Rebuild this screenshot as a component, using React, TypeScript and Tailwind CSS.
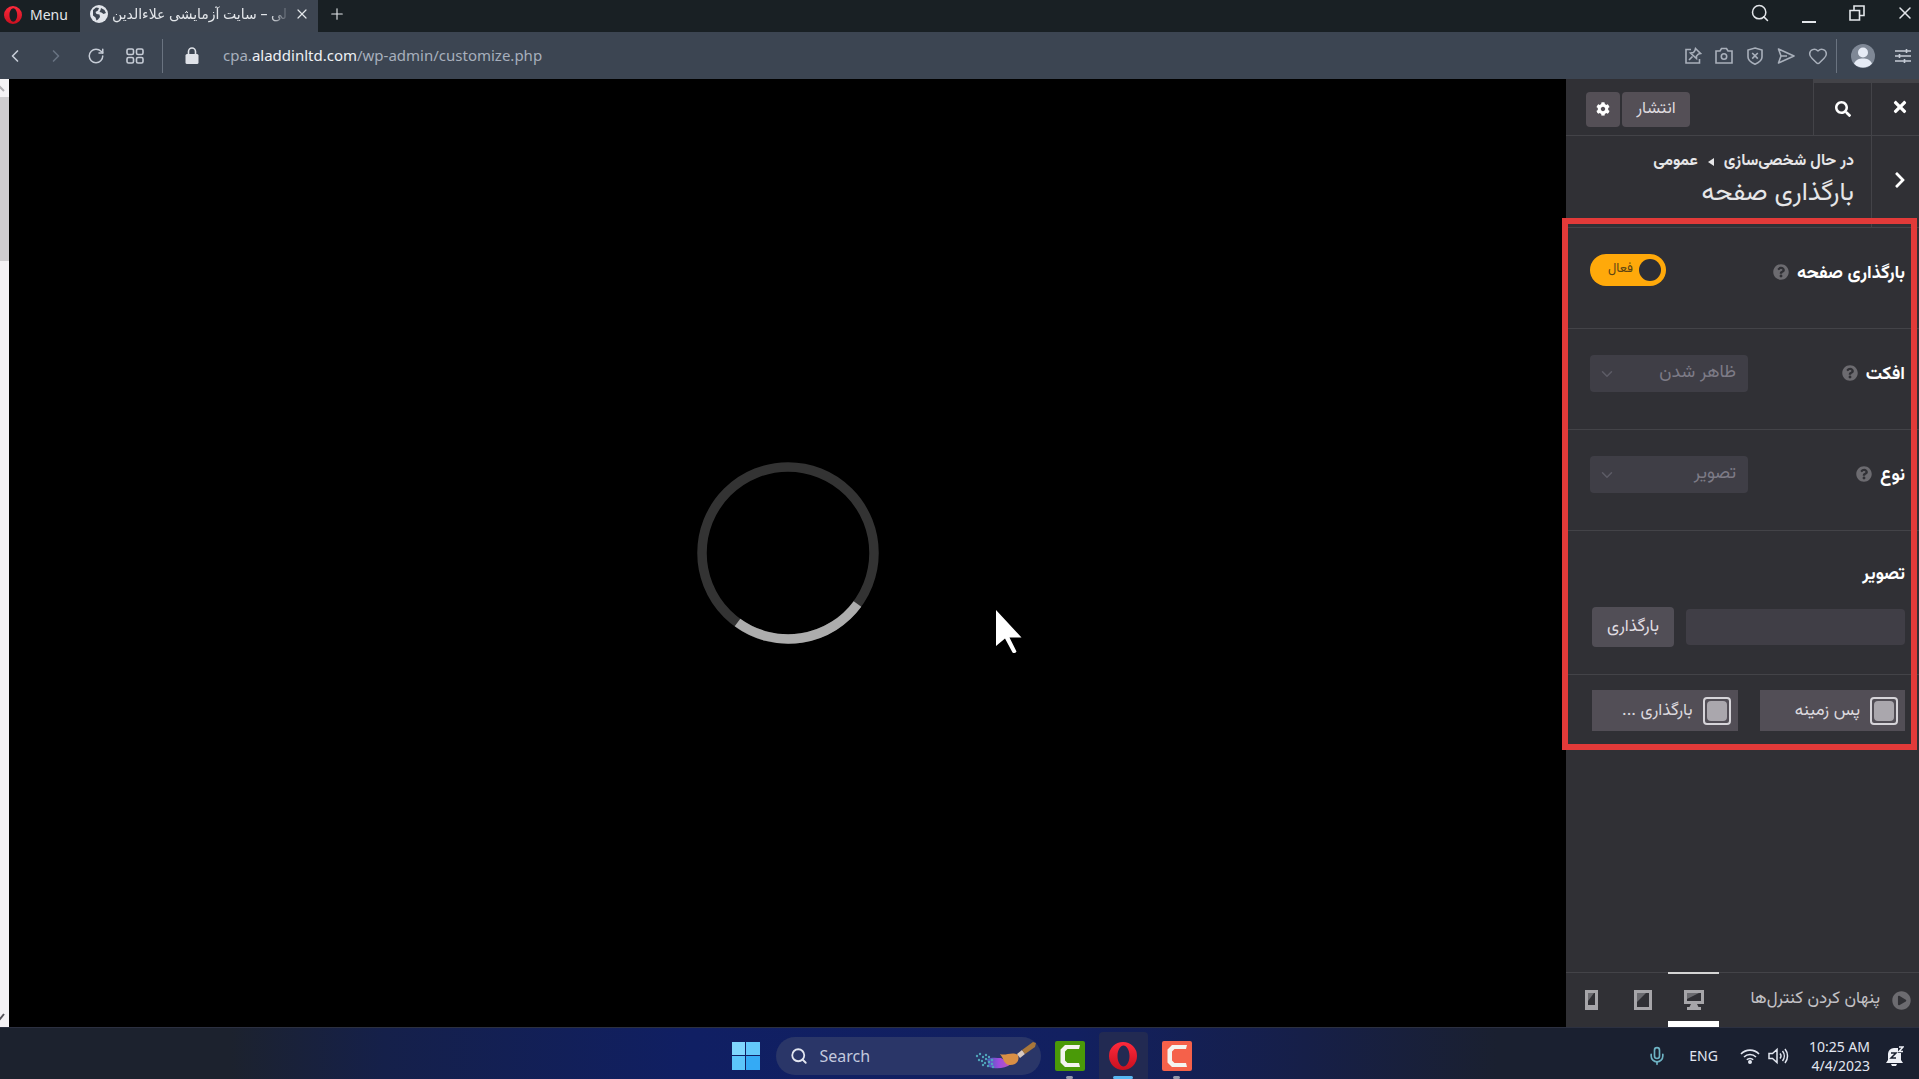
import { useState } from "react";
import type { ReactNode } from "react";
import {
  ChevronDown,
  ChevronLeft,
  ChevronRight,
  Heart,
  Mic,
  Plus,
  RotateCw,
  Search,
  X,
} from "lucide-react";
import { FaChevronRight, FaCog, FaPlayCircle, FaQuestionCircle, FaSearch, FaTimes } from "react-icons/fa";

export default function App() {
  return (
    <div className="flex h-screen flex-col overflow-hidden bg-black font-['Noto_Sans','DejaVu_Sans',sans-serif]">
      <TabBar />
      <AddressBar />
      <div className="flex min-h-0 flex-1">
        <PageScrollbar />
        <Preview />
        <Customizer />
      </div>
      <Taskbar />
    </div>
  );
}

function OperaLogo({ className }: { className: string }) {
  return (
    <svg viewBox="0 0 28 28" className={className}>
      <defs>
        <linearGradient id="opera" x1="0" y1="0" x2="0" y2="1">
          <stop offset="0" stopColor="#ff2a3c" />
          <stop offset="1" stopColor="#c8101f" />
        </linearGradient>
      </defs>
      <path
        fill="url(#opera)"
        fillRule="evenodd"
        d="M14 0a14 14 0 1 0 0 28a14 14 0 1 0 0-28zM14.500 3.500c3 0 6 4.500 6 10.500s-3 10.500-6 10.500s-6-4.500-6-10.500s3-10.500 6-10.500z"
      />
    </svg>
  );
}

function TabBar() {
  return (
    <header className="flex h-8 shrink-0 items-stretch bg-[#192024] text-[#e3e6ea]">
      <button className="flex w-20 items-center gap-2 pb-0.5 pl-1 text-sm">
        <OperaLogo className="h-5 w-[18px]" />
        Menu
      </button>
      <div className="flex w-[238px] items-center gap-1 bg-[#3d4551] pr-2 pb-1 pl-2.5">
        <svg viewBox="0 0 18 18" className="h-[18px] w-[18px] shrink-0">
          <circle cx="9" cy="9" r="9" fill="#e1e4ea" />
          <path
            fill="#3d4551"
            d="M3 5l3-2.500 3 .5-1 2.500-2.500 1.500 1 2 3 .5.500 2.500-2 2.500-1.500 1-1-3L3 10.500zM11 3l3.500 2 1.500 3-2.500 1-2-1.500-2-.5 1-2z"
          />
        </svg>
        <span className="min-w-0 flex-1 overflow-hidden text-left text-sm whitespace-nowrap [mask-image:linear-gradient(to_left,transparent,black_20px)]">
          <bdi dir="rtl">لی – سایت آزمایشی علاءالدین</bdi>
        </span>
        <button aria-label="Close tab">
          <X className="h-4 w-4" strokeWidth={1.800} />
        </button>
      </div>
      <button aria-label="New tab" className="px-2.5 pb-1">
        <Plus className="h-[18px] w-[18px]" strokeWidth={1.500} />
      </button>
      <div className="ml-auto flex items-center gap-[29px] pr-1 pb-1.5">
        <button aria-label="Search tabs">
          <Search className="h-5 w-5" strokeWidth={1.800} />
        </button>
        <button aria-label="Minimize" className="flex h-5 w-5 items-end justify-center">
          <span className="h-0.5 w-[14px] bg-[#e3e6ea]" />
        </button>
        <button aria-label="Restore">
          <svg viewBox="0 0 18 18" className="h-[18px] w-[18px]" fill="none" stroke="currentColor" strokeWidth="1.600">
            <path d="M2 6.500h9.500V16H2zM6 6.500V2h10v9.500h-4.500" />
          </svg>
        </button>
        <button aria-label="Close">
          <X className="h-5 w-5" strokeWidth={1.800} />
        </button>
      </div>
    </header>
  );
}

function AddressBar() {
  return (
    <nav className="flex h-[47px] shrink-0 items-center bg-[#3c4552] text-[#c6ccd6]">
      <div className="flex items-center gap-[21px] pl-[5px]">
        <button aria-label="Back">
          <ChevronLeft className="h-5 w-5" strokeWidth={2} />
        </button>
        <button aria-label="Forward" className="text-[#687281]">
          <ChevronRight className="h-5 w-5" strokeWidth={2} />
        </button>
        <button aria-label="Reload">
          <RotateCw className="h-[18px] w-[18px]" strokeWidth={2} />
        </button>
        <button aria-label="Speed dial">
          <svg viewBox="0 0 18 16" className="h-4 w-[18px]" fill="none" stroke="currentColor" strokeWidth="1.600">
            <rect x="1" y="1" width="6.500" height="5.500" rx="1.500" />
            <rect x="10.500" y="1" width="6.500" height="5.500" rx="1.500" />
            <rect x="1" y="9.500" width="6.500" height="5.500" rx="1.500" />
            <rect x="10.500" y="9.500" width="6.500" height="5.500" rx="1.500" />
          </svg>
        </button>
      </div>
      <span className="ml-[18px] h-[34px] w-px bg-[#6a7380]" />
      <svg viewBox="0 0 14 18" className="ml-[22px] h-[18px] w-[14px] shrink-0">
        <path d="M3.500 8V4.500a3.500 3.500 0 0 1 7 0V8" fill="none" stroke="#dfe2e8" strokeWidth="1.600" />
        <rect x="0.500" y="7" width="13" height="10" rx="1.500" fill="#dfe2e8" />
      </svg>
      <button aria-label="Address" className="ml-6 flex-1 text-left text-[15px] text-[#a7afbc]">
        cpa.<span className="text-[#eef0f4]">aladdinltd.com</span>/wp-admin/customize.php
      </button>
      <div className="flex items-center gap-[13px] text-[#a9b0bb]">
        <button aria-label="Pin">
          <svg viewBox="0 0 18 18" className="h-[18px] w-[18px]" fill="none" stroke="currentColor" strokeWidth="1.600">
            <path d="M7 2.500H2v13.500h13.500V12M5 13l3.500-3.500M11.500 1.500l5 5-2 .5-2 2v2.500L6.500 6l3-.5 1.500-2z" />
          </svg>
        </button>
        <button aria-label="Snapshot">
          <svg viewBox="0 0 18 18" className="h-[18px] w-[18px]" fill="none" stroke="currentColor" strokeWidth="1.600">
            <path d="M1 4h4l1.500-2.500h5L13 4h4v12H1z" />
            <circle cx="9" cy="9.500" r="2.700" />
          </svg>
        </button>
        <button aria-label="Ad blocker">
          <svg viewBox="0 0 18 18" className="h-[18px] w-[18px]" fill="none" stroke="currentColor" strokeWidth="1.600">
            <path d="M9 1l7 2v7c0 3.500-3 5.500-7 7.200C5 15.500 2 13.500 2 10V3zM6.200 6l5.600 5.600M11.800 6l-5.600 5.600" />
          </svg>
        </button>
        <button aria-label="Flow">
          <svg viewBox="0 0 18 18" className="h-[18px] w-[18px]" fill="none" stroke="currentColor" strokeWidth="1.600">
            <path d="M1.500 2l15.500 7-15.500 7 2.500-7zM4 9h6" strokeLinejoin="round" />
          </svg>
        </button>
        <button aria-label="Bookmark">
          <Heart className="h-5 w-5" strokeWidth={1.800} />
        </button>
      </div>
      <span className="ml-2 h-[34px] w-px bg-[#6a7380]" />
      <button aria-label="Profile" className="ml-3.5">
        <svg viewBox="0 0 24 24" className="h-6 w-6">
          <circle cx="12" cy="12" r="12" fill="#7f8896" />
          <circle cx="12" cy="8.500" r="5" fill="#e6ebf5" />
          <path d="M3 19.500c2-4 5-5 9-5s7 1 9 5a12 12 0 0 1-18 0z" fill="#e6ebf5" />
        </svg>
      </button>
      <button aria-label="Easy setup" className="mr-2 ml-5">
        <svg viewBox="0 0 16 16" className="h-4 w-4" stroke="currentColor" strokeWidth="1.600">
          <path d="M0 3h16M0 8h16M0 13h16M11.500 1v4M4.500 6v4M9.500 11v4" />
        </svg>
      </button>
    </nav>
  );
}

function PageScrollbar() {
  return (
    <div className="flex w-[9px] shrink-0 flex-col items-start bg-[#f4f2f5]">
      <svg viewBox="0 0 9 18" className="h-[18px] w-[9px]" fill="none" stroke="#b0aeb2" strokeWidth="2">
        <path d="M-3 12L0 8l4 4" />
      </svg>
      <span className="h-[164px] w-full bg-[#cfcdd0]" />
      <svg viewBox="0 0 9 18" className="mt-auto h-[18px] w-[9px]" fill="none" stroke="#55535a" strokeWidth="2">
        <path d="M-3 6L0 10l4-5" />
      </svg>
    </div>
  );
}

function Preview() {
  return (
    <main className="relative flex flex-1 items-center justify-center bg-black">
      <svg viewBox="0 0 182 182" className="h-[182px] w-[182px]" fill="none" strokeWidth="9.500">
        <circle cx="91" cy="91" r="86" stroke="#333333" />
        <path d="M160.500 142A86 86 0 0 1 40.500 160.500" stroke="#adadad" />
      </svg>
      <svg viewBox="0 0 27 44" className="absolute top-[56%] left-[63.300%] h-11 w-[27px]">
        <path d="M1 0v36l9-7.500 7.500 14q2.500 1.500 4-1l-7-14h12z" fill="#fff" />
      </svg>
    </main>
  );
}

function Customizer() {
  return (
    <aside
      dir="rtl"
      className="relative flex w-[353px] shrink-0 flex-col bg-[#303035] font-['Vazirmatn','Noto_Sans_Arabic','DejaVu_Sans',sans-serif] text-white"
    >
      <div className="flex h-[57px] shrink-0 border-b border-[#434348]">
        <button
          aria-label="بستن"
          className="flex w-12 items-center justify-center border-t-4 border-l border-[#434348] pb-1 pl-2"
        >
          <FaTimes className="h-[18px] w-[18px]" />
        </button>
        <button
          aria-label="جستجو"
          className="flex w-[58px] items-center justify-center border-t-4 border-l border-[#434348]"
        >
          <FaSearch className="h-4 w-4" />
        </button>
        <div className="mr-auto ml-5 flex items-center gap-0.5 pt-1">
          <button className="h-[35px] w-[68px] rounded-sm bg-[#544f56] text-[17px] leading-6 text-[#ddd9de]">انتشار</button>
          <button
            aria-label="تنظیمات"
            className="flex h-[35px] w-[34px] items-center justify-center rounded-sm bg-[#544f56]"
          >
            <FaCog className="h-[14px] w-[14px]" />
          </button>
        </div>
      </div>
      <div className="flex h-[92px] shrink-0 border-b border-[#434348]">
        <button
          aria-label="بازگشت"
          className="flex w-12 items-center justify-center border-l border-[#434348] pb-1 pl-2"
        >
          <FaChevronRight className="h-[18px] w-[18px]" />
        </button>
        <div className="flex flex-col justify-center gap-1 pr-[17px] pb-1">
          <p className="flex items-center gap-2.5 text-[16px] leading-6 font-bold text-[#e6e6e8]">
            در حال شخصی‌سازی
            <svg viewBox="0 0 6 8" className="h-2 w-1.5">
              <path d="M6 0v8L0 4z" fill="#e6e6e8" />
            </svg>
            عمومی
          </p>
          <h1 className="text-[26px] leading-8 text-[#e6e6e8]">بارگذاری صفحه</h1>
        </div>
      </div>

      <Row id="preload" label="بارگذاری صفحه">
        <Toggle />
      </Row>
      <Row id="effect" label="افکت">
        <Select id="effect" value="ظاهر شدن" />
      </Row>
      <Row id="type" label="نوع">
        <Select id="type" value="تصویر" />
      </Row>
      <div className="h-36 shrink-0 border-b border-[#434348] px-3.5 pt-[30px]">
        <label htmlFor="image" className="block text-[18px] leading-7 font-bold">
          تصویر
        </label>
        <div className="mt-[18px] ml-3 flex items-center gap-3">
          <input id="image" className="h-9 min-w-0 flex-1 rounded bg-[#403e46] px-3 text-[17px] outline-none" />
          <button className="h-10 w-[82px] rounded-sm bg-[#514e56] text-[17px] leading-6 text-[#e0dde2]">بارگذاری</button>
        </div>
      </div>
      <div className="mt-[15px] mr-[14px] ml-[26px] grid grid-cols-2 gap-[22px]">
        <ColorButton label="پس زمینه" />
        <ColorButton label="بارگذاری ..." />
      </div>

      <Footer />
      <div className="pointer-events-none absolute top-[139px] right-0.5 -left-1 h-[532px] border-[6px] border-[#e23a39]" />
    </aside>
  );
}

function Row({ id, label, children }: { id: string; label: string; children: ReactNode }) {
  return (
    <div className="flex h-[101px] shrink-0 items-start border-b border-[#434348] pt-[26px] pr-3.5 pl-6">
      <label htmlFor={id} className="text-[18px] leading-10 font-bold">
        {label}
      </label>
      <FaQuestionCircle className="mt-2.5 mr-2 h-4 w-4 text-[#6c6b70]" />
      <div className="mr-auto">{children}</div>
    </div>
  );
}

function Toggle() {
  const [on, setOn] = useState(true);
  return (
    <label className="relative flex h-8 w-[76px] items-center rounded-full bg-[#ffa90a] pr-[5px]">
      <input
        id="preload"
        type="checkbox"
        checked={on}
        onChange={(e) => setOn(e.target.checked)}
        className="h-[22px] w-[22px] appearance-none rounded-full bg-[#2d2e35]"
      />
      <span className="mr-1.5 text-[13px] text-[#5c4413]">فعال</span>
    </label>
  );
}

function Select({ id, value }: { id: string; value: string }) {
  return (
    <div className="relative">
      <select
        id={id}
        className="h-[37px] w-[158px] appearance-none rounded-sm bg-[#3f3e46] pr-3 pl-8 text-[18px] text-[#7d7b86] outline-none"
      >
        <option>{value}</option>
      </select>
      <ChevronDown className="pointer-events-none absolute top-2.5 left-2 h-[18px] w-[18px] text-[#5d5c66]" />
    </div>
  );
}

function ColorButton({ label }: { label: string }) {
  return (
    <button className="flex h-[41px] items-center gap-2.5 bg-[#524e56] pr-[7px] text-[17px] leading-6 text-[#dcd9de]">
      <span className="h-7 w-7 rounded border-2 border-[#d6d4d9] p-0.5">
        <span className="block h-full w-full rounded-sm bg-[#aaa7ad]" />
      </span>
      {label}
    </button>
  );
}

function Footer() {
  return (
    <footer className="mt-auto flex h-[55px] shrink-0 items-stretch border-t border-[#434348] pr-2">
      <button className="flex items-center gap-3 text-[17px] text-[#c3c2c6]">
        <FaPlayCircle className="h-[19px] w-[19px] text-[#6c6b70]" />
        پنهان کردن کنترل‌ها
      </button>
      <div className="mr-auto flex">
        <button
          aria-label="رومیزی"
          className="-mt-px flex w-[51px] items-center justify-center border-t-2 border-b-[6px] border-t-[#d5d5d5] border-b-white"
        >
          <svg viewBox="0 0 20 20" className="mt-1 h-5 w-5">
            <path fill="#a6a5a9" fillRule="evenodd" d="M0 0h20v14h-7l1.500 3H17v3H3v-3h2.500L7 14H0zM3 3v8h14V3z" />
            <path d="M3 3h12L3 9z" fill="#6b6b70" />
          </svg>
        </button>
        <button aria-label="تبلت" className="flex w-[51px] items-center justify-center">
          <svg viewBox="0 0 18 20" className="h-5 w-[18px]">
            <path fill="#a6a5a9" fillRule="evenodd" d="M0 0h18v20H0zM3 3v14h12V3z" />
            <path d="M3 3h9l-9 9z" fill="#6b6b70" />
          </svg>
        </button>
        <button aria-label="موبایل" className="flex w-[51px] items-center justify-center">
          <svg viewBox="0 0 13 20" className="h-5 w-[13px]">
            <path fill="#a6a5a9" fillRule="evenodd" d="M0 0h13v20H0zM3 3v12h7V3z" />
            <path d="M3 3h6l-6 8z" fill="#6b6b70" />
          </svg>
        </button>
      </div>
    </footer>
  );
}

function CamtasiaLogo({ color }: { color: string }) {
  return (
    <svg viewBox="0 0 30 30" className="h-[30px] w-[30px]">
      <rect width="30" height="30" rx="2" fill={color} />
      <path d="M25 4l-1 4H12.500L10 10.500v9l2.500 2.500H24l1 4H10l-4.500-4.500V8.500L10 4z" fill="#f4f4f0" />
    </svg>
  );
}

function Taskbar() {
  return (
    <footer className="grid h-[52px] shrink-0 grid-cols-[1fr_auto_1fr] items-center border-t border-[#2c3040] bg-[linear-gradient(to_right,#1c222e_12%,#15204a_20%,#101f63_36%,#122060_56%,#161f48_68%,#1a2030_78%)] text-[#e2e6f0]">
      <span />
      <div className="flex items-center pt-1 pl-3.5">
        <button aria-label="Start" className="grid h-7 w-7 grid-cols-2 gap-px">
          <span className="bg-[#7fd6fd]" />
          <span className="bg-[#63c8fb]" />
          <span className="bg-[#5cc5fa]" />
          <span className="bg-[#34aaf5]" />
        </button>
        <label className="ml-4 flex h-[38px] w-[265px] items-center rounded-full bg-[#2a3668] pl-3.5">
          <Search className="h-[18px] w-[18px]" strokeWidth={2.400} />
          <input
            placeholder="Search"
            aria-label="Search"
            className="ml-3 w-0 min-w-0 flex-1 bg-transparent text-base outline-none placeholder:text-[#c3c9de]"
          />
          <Paintbrush />
        </label>
        <button aria-label="Camtasia" className="relative ml-1 flex h-[47px] w-[50px] items-center justify-center">
          <CamtasiaLogo color="#4a9a08" />
          <span className="absolute bottom-0 h-[3px] w-[7px] rounded-full bg-[#9398ab]" />
        </button>
        <button
          aria-label="Opera"
          className="relative ml-1 flex h-[47px] w-[49px] items-center justify-center rounded-t bg-[#222a52]"
        >
          <OperaLogo className="h-7 w-7" />
          <span className="absolute bottom-0 h-[3px] w-5 rounded-full bg-[#57b8f2]" />
        </button>
        <button aria-label="Camtasia recorder" className="relative ml-1 flex h-[47px] w-[50px] items-center justify-center">
          <CamtasiaLogo color="#f5614a" />
          <span className="absolute bottom-0 h-[3px] w-[7px] rounded-full bg-[#9398ab]" />
        </button>
      </div>
      <div className="flex items-center justify-end pt-1 pr-[15px]">
        <Mic className="h-5 w-5 text-[#6eb3c4]" />
        <span className="ml-[22px] text-sm">ENG</span>
        <svg viewBox="0 0 20 16" className="ml-[22px] h-4 w-5" fill="none" stroke="currentColor" strokeWidth="1.600">
          <path d="M1 6a12.500 12.500 0 0 1 18 0M4 9a8.500 8.500 0 0 1 12 0M6.800 11.800a4.500 4.500 0 0 1 6.400 0" />
          <circle cx="10" cy="14" r="1.200" fill="currentColor" />
        </svg>
        <svg viewBox="0 0 21 18" className="ml-2 h-[18px] w-[21px]" fill="none" stroke="currentColor" strokeWidth="1.500">
          <path d="M1 6.500h3.500L9 2.500v13l-4.500-4H1zM12 6.500a4 4 0 0 1 0 5M14.500 4a8 8 0 0 1 0 10M17 2a11 11 0 0 1 0 14" />
        </svg>
        <p className="ml-5 text-right text-sm leading-[19px]">
          10:25 AM
          <br />
          4/4/2023
        </p>
        <Bell />
      </div>
    </footer>
  );
}

function Paintbrush() {
  const dots = [
    [2, 15], [5, 13], [8, 16], [11, 14], [4, 19], [7, 20], [11, 18], [14, 16], [10, 22], [14, 21], [8, 24], [13, 25],
    [17, 19], [17, 23], [18, 26],
  ];
  return (
    <svg viewBox="0 0 62 30" className="mr-1 h-[30px] w-[62px]">
      <defs>
        <linearGradient id="paint">
          <stop offset="0" stopColor="#3d62b8" />
          <stop offset="0.500" stopColor="#a04ae0" />
          <stop offset="1" stopColor="#c05ab0" />
        </linearGradient>
      </defs>
      <path d="M12 18c5-2 10-1 14-1l10 6c-6 5-16 5-22 3z" fill="url(#paint)" />
      {dots.map(([x, y]) => (
        <circle key={`${x}-${y}`} cx={x} cy={y} r="1.200" fill="#4fa5bb" />
      ))}
      <path d="M25 13c6 2 12-3 18 1 2 6-2 10-8 10-6 0-6-6-10-11z" fill="#d98f45" />
      <path d="M42 13l5-4 3 4-5 4z" fill="#d9c9bf" />
      <path d="M47 9l11-8 3 1-1 4-10 7z" fill="#a9773a" />
    </svg>
  );
}

function Bell() {
  return (
    <svg viewBox="0 0 18 20" className="ml-4 h-5 w-[18px]">
      <path d="M2 14V8a6 6 0 0 1 6-6h4v5h3v7l2 3H0z" fill="#eef0f6" />
      <path d="M5 18h6l-1 2H6z" fill="#eef0f6" />
      <path d="M5 7h5l-5 5h5" stroke="#1a2030" strokeWidth="1.500" fill="none" />
      <path d="M13 1h4l-4 4.500h4" stroke="#eef0f6" strokeWidth="1.500" fill="none" />
    </svg>
  );
}
